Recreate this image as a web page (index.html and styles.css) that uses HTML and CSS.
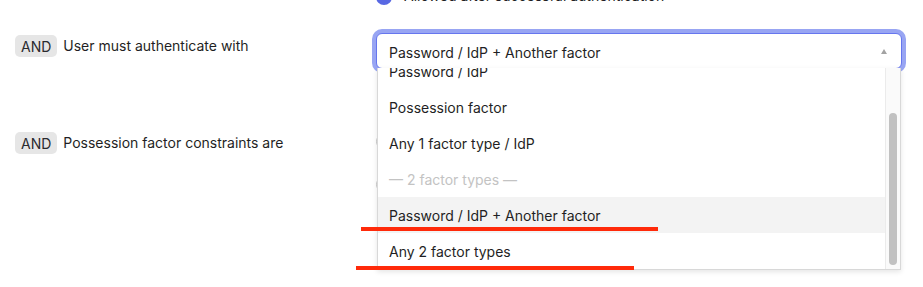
FILE: index.html
```html
<!DOCTYPE html>
<html>
<head>
<meta charset="utf-8">
<link rel="stylesheet" href="styles.css">
</head>
<body>
<div class="page">
  <div class="rule top-row">
    <div class="cond"></div>
    <div class="field">
      <label class="radio"><span class="dot checked"></span><span>Allowed after successful authentication</span></label>
    </div>
  </div>

  <div class="rule row-auth">
    <div class="cond"><span class="badge">AND</span><span class="label">User must authenticate with</span></div>
    <div class="field">
      <div class="select-wrap">
        <div class="select">
          <span>Password / IdP + Another factor</span>
          <span class="caret"></span>
        </div>
        <div class="menu">
          <ul class="options">
            <li class="opt">Password / IdP</li>
            <li class="opt">Possession factor</li>
            <li class="opt">Any 1 factor type / IdP</li>
            <li class="opt group">— 2 factor types —</li>
            <li class="opt active">Password / IdP + Another factor</li>
            <li class="opt">Any 2 factor types</li>
          </ul>
          <div class="scrollbar"><div class="thumb"></div></div>
        </div>
      </div>
    </div>
  </div>

  <div class="rule row-poss">
    <div class="cond"><span class="badge">AND</span><span class="label">Possession factor constraints are</span></div>
    <div class="field">
      <div class="checks">
        <span class="dot"></span>
        <span class="dot"></span>
      </div>
    </div>
  </div>

  <div class="mark mark-1"></div>
  <div class="mark mark-2"></div>
</div>
</body>
</html>
```

FILE: styles.css
```css
html, body {
  margin: 0;
  padding: 0;
  background: #ffffff;
}

body {
  font-family: Inter, "Noto Sans", "Liberation Sans", sans-serif;
  font-size: 14px;
  color: #1f1f24;
  overflow: hidden;
}

.page {
  position: relative;
  width: 923px;
  height: 287px;
  overflow: hidden;
}

.rule {
  display: grid;
  grid-template-columns: 376px 526px;
}

.cond {
  display: flex;
  align-items: center;
  gap: 6px;
  padding-left: 15px;
  align-self: start;
  padding-top: 2px;
}

.badge {
  display: inline-flex;
  align-items: center;
  height: 22px;
  padding: 0 6px;
  border-radius: 5px;
  background: #e6e6e6;
  color: #2a2a2e;
  font-size: 14px;
}

.label {
  line-height: 22px;
}

.top-row {
  margin-top: -14px;
  height: 20px;
}

.top-row .cond {
  padding-top: 0;
}

.radio {
  display: flex;
  align-items: center;
  gap: 12px;
  height: 20px;
  line-height: 20px;
}

.dot {
  box-sizing: border-box;
  width: 15px;
  height: 15px;
  border-radius: 50%;
  border: 1px solid #c9c9c9;
  background: #fff;
  flex: none;
}

.dot.checked {
  border: none;
  width: 16px;
  height: 16px;
  background: #5868e3;
  margin-top: 2px;
}

.row-auth {
  margin-top: 27px;
  position: relative;
  z-index: 2;
}

.select-wrap {
  position: relative;
}

.select {
  box-sizing: border-box;
  width: 526px;
  height: 36px;
  border: 1px solid #6676ee;
  border-radius: 6px;
  box-shadow: 0 0 0 4px #98a5f3;
  display: flex;
  align-items: center;
  justify-content: space-between;
  padding: 2px 12px 0 12px;
  background: #fff;
}

.caret {
  width: 0;
  height: 0;
  border-left: 3px solid transparent;
  border-right: 3px solid transparent;
  border-bottom: 5px solid #a3a3a3;
  margin-right: 2px;
  margin-top: -2px;
}

.menu {
  position: absolute;
  top: 35px;
  left: 1px;
  box-sizing: border-box;
  width: 524px;
  height: 202px;
  background: #fff;
  border: 1px solid #d8d8d8;
  border-top: none;
  box-shadow: 0 2px 5px rgba(0, 0, 0, 0.10);
  overflow: hidden;
  display: flex;
}

.options {
  list-style: none;
  margin: -15px 0 0 0;
  padding: 0;
  flex: 1;
}

.opt {
  box-sizing: border-box;
  height: 36px;
  line-height: 36px;
  padding: 1px 0 0 11px;
  white-space: nowrap;
}

.opt.group {
  color: #c3c3c3;
}

.opt.active {
  background: #f3f3f3;
}

.scrollbar {
  flex: none;
  width: 15px;
  border-left: 1px solid #ebebeb;
  background: #fafafa;
  display: flex;
  flex-direction: column;
  justify-content: flex-end;
  align-items: center;
  padding-bottom: 4px;
  box-sizing: border-box;
}

.thumb {
  width: 8px;
  height: 152px;
  border-radius: 4px;
  background: #c1c1c1;
}

.row-poss {
  margin-top: 61px;
}

.checks {
  display: flex;
  flex-direction: column;
  gap: 28px;
  padding-top: 4px;
}

.mark {
  position: absolute;
  height: 4px;
  background: #ff2a0a;
  z-index: 5;
}

.mark-1 {
  left: 361px;
  top: 227px;
  width: 297px;
}

.mark-2 {
  left: 356px;
  top: 266px;
  width: 278px;
}
```
